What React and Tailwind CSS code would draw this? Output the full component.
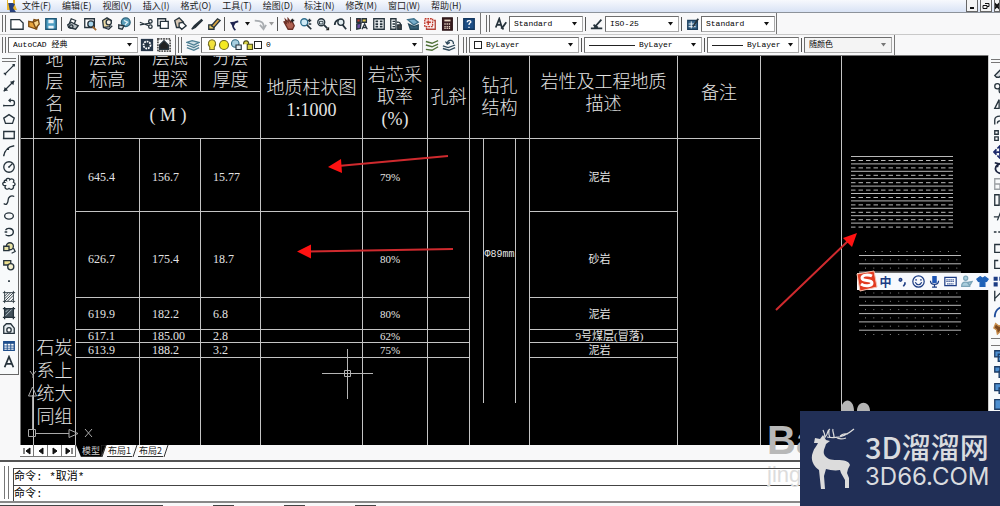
import React, { useState } from "react";

const Ico = ({ children, size = 14, color = "#26333c" }) => (
  <svg
    width={size}
    height={size}
    viewBox="0 0 16 16"
    fill="none"
    stroke={color}
    strokeWidth="1.5"
    className="shrink-0"
  >
    {children}
  </svg>
);

const standardTools = [
  [
    { name: "新建", art: <path d="M1 3h10l4 4v7H1z" fill="#fff" /> },
    {
      name: "打开",
      art: (
        <>
          <path d="M2 5l5 1 1-3 5 1-2 10-9-3z" fill="#e8a33a" stroke="#7a4a12" />
          <path d="M7 6l6-3 1 5-4 5z" fill="#f7d489" stroke="#7a4a12" />
        </>
      ),
    },
    {
      name: "保存",
      art: (
        <>
          <path d="M2 2h12v12H2z" fill="#4f9fc4" stroke="#1f5675" />
          <path d="M5 3h6v4H5zM5 10h6v3H5z" fill="#eef6fa" stroke="none" />
        </>
      ),
    },
  ],
  [
    {
      name: "打印",
      art: (
        <>
          <path d="M4 7l2-5 5 2-2 5" fill="#fff" />
          <path d="M2 9l4-3 8 4-3 4-8-2z" fill="#b9c0c4" />
          <circle cx="6" cy="11" r="2" />
        </>
      ),
    },
    {
      name: "打印预览",
      art: (
        <>
          <path d="M2 2h11v10H2z" fill="#fff" />
          <circle cx="9" cy="8" r="3.5" fill="#a9d5ea" />
          <path d="M11 11l4 4" stroke="#a0682d" strokeWidth="2" />
        </>
      ),
    },
    {
      name: "发布",
      art: (
        <>
          <path d="M3 4l5-3 5 3-2 7-7 1z" fill="#ead9a1" />
          <circle cx="10" cy="6" r="3" fill="#f4efe0" />
          <path d="M4 12l6 2 4-4" />
        </>
      ),
    },
    {
      name: "三维 DWF",
      art: (
        <>
          <circle cx="10" cy="6" r="5" fill="#5b9fbb" stroke="#2b6078" />
          <path d="M2 9l6 1-2 4-4-1z" fill="#cfd8dc" />
          <path d="M8 4l4 2-3 3" stroke="#e7f3f8" />
        </>
      ),
    },
  ],
  [
    {
      name: "剪切",
      art: (
        <>
          <path d="M1 6l10 4M1 9l12-2" />
          <circle cx="13" cy="5" r="2" />
          <circle cx="13" cy="11" r="2" />
        </>
      ),
    },
    {
      name: "复制",
      art: (
        <>
          <path d="M2 2h9v8H2z" fill="#fff" />
          <path d="M5 5h9v8H5z" fill="#fff" />
        </>
      ),
    },
    {
      name: "粘贴",
      art: (
        <>
          <path d="M2 4l5-3 5 5-2 6H4z" fill="#d6c7b4" />
          <path d="M7 7l4-1 4 4-5 4-3-3z" fill="#fff" />
        </>
      ),
    },
    {
      name: "特性匹配",
      art: <path d="M2 14l4-2 8-8-1-1-8 7z" fill="#222" />,
    },
    {
      name: "块编辑器",
      art: (
        <>
          <path d="M2 9h6v5H2z" fill="#f1d26a" />
          <path d="M5 10l7-8 3 2-7 8z" fill="#d8a441" />
        </>
      ),
    },
  ],
];

const viewTools = [
  [
    {
      name: "实时平移",
      art: (
        <>
          <path d="M2 5l3 2-1-4 3 3V2l3 4 1-2 3 6-2 4H7z" fill="#b06252" stroke="#6b2f25" />
          <path d="M12 2v4M10 4h4" stroke="#222" />
        </>
      ),
    },
    {
      name: "实时缩放",
      art: (
        <>
          <circle cx="6" cy="6" r="4" fill="#cfe9f5" stroke="#2d6d8d" />
          <path d="M9 9l5 5" strokeWidth="2" />
          <path d="M12 2v4M10 4h4M11 8h3" />
        </>
      ),
    },
    {
      name: "窗口缩放",
      art: (
        <>
          <circle cx="6" cy="6" r="4" fill="#e4eef2" />
          <path d="M4 5h4v3H4z" strokeWidth="1" />
          <path d="M9 9l4 4" strokeWidth="2" />
          <path d="M15 11v4h-4z" fill="#222" stroke="none" />
        </>
      ),
    },
    {
      name: "缩放上一个",
      art: (
        <>
          <path d="M2 9c0-5 5-7 9-6" strokeWidth="2" />
          <circle cx="9" cy="6" r="3.5" fill="#e4eef2" />
          <path d="M11 9l4 5" strokeWidth="2" />
        </>
      ),
    },
  ],
  [
    {
      name: "特性",
      art: (
        <>
          <path d="M2 2h4v4H2z" fill="#c0392b" />
          <path d="M8 2h5v4H8z" fill="#d9c24a" />
          <path d="M2 8l5-1-1 6-4 1z" fill="#6d4ba3" />
          <path d="M8 14l3-6 3 6M9 12h4" />
        </>
      ),
    },
    {
      name: "设计中心",
      art: (
        <>
          <path d="M2 2h12v12H2z" fill="#f3f6f7" />
          <path d="M4 5h3M4 8h3M4 11h3M9 5h3M9 8h3M9 11h3" strokeWidth="2" />
        </>
      ),
    },
    {
      name: "工具选项板",
      art: (
        <>
          <path d="M2 2h6v12H2z" fill="#f3f6f7" />
          <path d="M4 5h3M4 8h3M4 11h3M9 6c4-1 5 2 4 7" />
          <path d="M10 9h4v5h-4z" fill="#444" />
        </>
      ),
    },
    {
      name: "图纸集",
      art: (
        <>
          <path d="M2 3l7-1 5 4-5 3z" fill="#78aecb" stroke="#3c6f8a" />
          <path d="M3 8l6 3 5-2v5H5z" fill="#38637a" stroke="#24485a" />
        </>
      ),
    },
    {
      name: "标记集",
      art: (
        <>
          <path d="M2 2h9v9H2z" fill="#f9e5e5" stroke="#c0392b" strokeDasharray="2 1" />
          <path d="M12 4h2v10H4v-2" stroke="#b5453a" />
          <path d="M6 4v5M4 6h5" stroke="#c0392b" />
        </>
      ),
    },
    {
      name: "计算器",
      art: (
        <>
          <path d="M3 1h11v14H3z" fill="#3b1f22" stroke="#2b1417" />
          <path d="M5 3h7v2H5z" fill="#e8d8c4" stroke="none" />
          <path d="M5 8h7M5 11h7M5 13h7" stroke="#e8d8c4" strokeDasharray="1.5 1" />
        </>
      ),
    },
  ],
];

const drawTools = [
  { name: "直线", art: <path d="M3 13L13 3M2 12h2v2M12 2h2v2" /> },
  {
    name: "构造线",
    art: (
      <>
        <path d="M2 14L14 2" />
        <path d="M2 14l1-5 4 4zM14 2l-5 1 4 4z" fill="#26333c" stroke="none" />
      </>
    ),
  },
  { name: "多段线", art: <path d="M2 11h10c3 0 3-6 0-6H8M10 3L8 5l2 2M2 10v2" /> },
  { name: "正多边形", art: <path d="M8 3l6 4-2 6H4L2 7z" /> },
  { name: "矩形", art: <path d="M2 4h12v8H2zM1 12h3M12 4h3" /> },
  { name: "圆弧", art: <path d="M2 14C3 7 7 3 14 2M2 12v2M6 6h2" /> },
  {
    name: "圆",
    art: (
      <>
        <circle cx="8" cy="8" r="6" />
        <path d="M8 8l4-4M7 8h2" />
      </>
    ),
  },
  {
    name: "修订云线",
    art: (
      <path d="M5 4c-1-3 4-3 4-1 2-2 6 0 4 3 3 1 2 4 0 4 1 4-3 5-5 3-2 2-6 0-4-3-4 0-4-4-1-4-1-1 0-3 2-2z" />
    ),
  },
  { name: "样条曲线", art: <path d="M2 12c3 3 5-1 5-4s3-6 7-4" /> },
  { name: "椭圆", art: <ellipse cx="8" cy="8" rx="5" ry="3.5" /> },
  { name: "椭圆弧", art: <path d="M4 6c2-4 9-2 9 2 0 5-7 5-9 3M3 8h3" /> },
  {
    name: "插入块",
    art: (
      <>
        <circle cx="9" cy="6" r="4" fill="#e9e3a5" />
        <path d="M2 6h6v5H2z" fill="#e9e3a5" />
        <path d="M13 8l2 4-4 2" />
      </>
    ),
  },
  {
    name: "创建块",
    art: (
      <>
        <path d="M2 3h8v5H2z" fill="#eee08e" />
        <circle cx="10" cy="10" r="3.5" fill="#f6f1cf" />
      </>
    ),
  },
  { name: "点", art: <path d="M7 8h2" strokeWidth="2" /> },
  {
    name: "图案填充",
    art: (
      <path d="M1 3h14M1 13h14M3 1v14M13 1v14M3 7l4-4M3 10l7-7M3 13L13 3M6 13l7-7M10 13l3-3" strokeWidth="1" />
    ),
  },
  {
    name: "渐变色",
    art: (
      <>
        <path d="M3 3h10v10H3z" fill="#44525c" stroke="none" />
        <path d="M1 3h14M1 13h14M3 1v14M13 1v14" />
        <path d="M4 7l3-3M4 11l7-7" stroke="#b9c8d1" strokeWidth="1" />
      </>
    ),
  },
  {
    name: "面域",
    art: (
      <>
        <path d="M2 13V5l3-3h5l4 5v6z" fill="#e6ecef" />
        <circle cx="8" cy="9" r="2.5" fill="#fff" />
      </>
    ),
  },
  {
    name: "表格",
    art: (
      <>
        <path d="M2 3h12v10H2z" fill="#fff" stroke="#1e4e8c" />
        <path d="M2 4h12" stroke="#1e4e8c" strokeWidth="3" />
        <path d="M2 8h12M2 10.500h12M6 4v9M10 4v9" stroke="#1e4e8c" strokeWidth="1" />
      </>
    ),
  },
  { name: "多行文字", art: <path d="M3 14L8 2l5 12M5 10h6" strokeWidth="2" /> },
];

const modifyTools = [
  { name: "删除", art: <path d="M2 12l9-9 5 3-9 8H4z" fill="#d9dee2" /> },
  { name: "复制对象", art: <path d="M5 3a3 3 0 100 6 3 3 0 000-6zM10 8a3 3 0 100 6" /> },
  { name: "镜像", art: <path d="M2 13L7 3v10zM10 3v11" /> },
  { name: "偏移", art: <path d="M2 8c0-6 12-6 12 0M5 12c0-4 6-4 6 0M2 8v5" /> },
  { name: "阵列", art: <path d="M2 2h4v4H2zM9 2h4v4H9zM2 9h4v4H2zM9 9h4v4H9z" /> },
  {
    name: "移动",
    art: <path d="M8 1v14M1 8h14M5 4l3-3 3 3M5 12l3 3 3-3M4 5L1 8l3 3" stroke="#1b2a6b" strokeWidth="2" />,
  },
  { name: "旋转", art: <path d="M13 3C6 2 2 6 3 10s6 5 9 3M2 2l4 1-1 4" stroke="#1b2440" strokeWidth="2" /> },
  { name: "缩放", art: <path d="M2 2h12v12H2zM2 8h6v6" stroke="#9a9fa3" /> },
  { name: "拉伸", art: <path d="M2 2h5v12H2zM9 3l5 10" /> },
  { name: "修剪", art: <path d="M1 9h5M5 13L9 3M9 9h5" /> },
  { name: "延伸", art: <path d="M1 8h14" strokeDasharray="3 2" /> },
  { name: "打断于点", art: <path d="M2 4h12v9H2zM10 2v4" /> },
  { name: "打断", art: <path d="M6 4H2v9h12M10 2v4" /> },
  { name: "合并", art: <path d="M2 8h4M9 8h5" /> },
  { name: "倒角", art: <path d="M2 14V2M2 11l9-9h4" /> },
  { name: "圆角", art: <path d="M2 14C2 7 6 2 14 2" stroke="#1f4d9b" strokeWidth="2" /> },
  {
    name: "分解",
    art: <path d="M3 3l4 3 5-4-1 6 4 4-6-1-4 4-1-5-3-2z" fill="#7b4a21" stroke="#c98f4e" />,
  },
];

const orderTools = [
  { name: "前置", art: "M2 2h7v7H2zM6 6h8v8H6z" },
  { name: "后置", art: "M2 2h6v6H2zM7 7h7v7H7z" },
  { name: "置于对象之上", art: "M2 3h9v8H2zM7 8h7v6H7z" },
  { name: "置于对象之下", art: "M2 3h12v11H2z" },
];

const menus = [
  "文件(F)",
  "编辑(E)",
  "视图(V)",
  "插入(I)",
  "格式(O)",
  "工具(T)",
  "绘图(D)",
  "标注(N)",
  "修改(M)",
  "窗口(W)",
  "帮助(H)",
];

const layers = [
  { bottom: "645.4", depth: "156.7", thick: "15.77", rate: "79%", rock: "泥岩", row: "h-[73px]", pad: "pt-1", side: "pr-2" },
  { bottom: "626.7", depth: "175.4", thick: "18.7", rate: "80%", rock: "砂岩", row: "h-[86px]", pad: "pt-2", side: "pr-2" },
  { bottom: "619.9", depth: "182.2", thick: "6.8", rate: "80%", rock: "泥岩", row: "h-[32px]", pad: "pt-0", side: "pr-2" },
  { bottom: "617.1", depth: "185.00", thick: "2.8", rate: "62%", rock: "9号煤层(冒落)", row: "h-[13px]", pad: "pt-0", side: "pl-3" },
  { bottom: "613.9", depth: "188.2", thick: "3.2", rate: "75%", rock: "泥岩", row: "h-[15px]", pad: "pt-0", side: "pr-2" },
];

const Grip = () => (
  <div className="flex gap-[2px] self-stretch py-[2px] px-[2px] shrink-0">
    <span className="w-px bg-[#6b6b6b]" />
    <span className="w-px bg-[#6b6b6b]" />
  </div>
);

const Sep = () => <span className="w-px h-[14px] mx-[2px] bg-[#555] shrink-0" />;

const Tool = ({ tool }) => (
  <button
    type="button"
    aria-label={tool.name}
    className="w-[17px] h-[16px] flex items-center justify-center shrink-0"
  >
    <Ico>{tool.art}</Ico>
  </button>
);

const Caret = ({ color = "#111" }) => (
  <svg width="7" height="4" viewBox="0 0 7 4" className="shrink-0">
    <path d="M1 0h5L3.500 3.500z" fill={color} />
  </svg>
);

const Combo = ({ label, value, width, lead, disabled }) => (
  <div
    className={`${width} h-[16px] flex items-center gap-1 px-1 border-t border-l border-[#6d6d6d] border-r border-b border-r-[#aaa] border-b-[#aaa] shrink-0 ${
      disabled ? "bg-[#f4f4f4]" : "bg-white"
    }`}
  >
    {lead}
    <select
      aria-label={label}
      defaultValue={value}
      className="appearance-none bg-transparent flex-1 min-w-0 h-[14px] leading-[14px] text-[8px] text-black outline-none"
    >
      <option>{value}</option>
    </select>
    <Caret color={disabled ? "#777" : "#111"} />
  </div>
);

const MenuBar = () => (
  <nav className="h-[13px] flex items-center justify-between border-b border-[#8d939b] bg-linear-to-b from-[#f7f9fd] to-[#d9e3f5] text-[9px] leading-[12px] text-[#1c1c1c]">
    <div className="flex items-center gap-[11px] pl-[7px]">
      <svg width="10" height="12" viewBox="0 0 10 12" className="-mr-[6px]">
        <path d="M0 0h8v5l2 5H0z" fill="#e9b62c" />
        <path d="M1 1l7 3-2 4 3 4H3z" fill="#27407d" />
        <path d="M1 0h5v3H1z" fill="#fff" />
      </svg>
      {menus.map((m) => (
        <a key={m} href="#menu">
          {m}
        </a>
      ))}
    </div>
    <div className="flex gap-[2px] self-stretch">
      {["最小化", "还原", "关闭"].map((b, i) => (
        <button
          key={b}
          type="button"
          aria-label={b}
          className={`${
            i === 2 ? "w-[6px]" : "w-[12px]"
          } overflow-hidden bg-[#f4f4f4] border-r border-b border-l border-[#666] flex items-center justify-center`}
        >
          <svg width="8" height="8" viewBox="0 0 8 8" stroke="#111" fill="none" className="shrink-0">
            {i === 0 && <path d="M2 6h4" strokeWidth="2" />}
            {i === 1 && <path d="M3 1.500h4v3H5M1 3.500h4v3H1z" />}
            {i === 2 && <path d="M1 1l6 6M7 1L1 7" strokeWidth="2" />}
          </svg>
        </button>
      ))}
    </div>
  </nav>
);

const StandardBar = () => (
  <div className="h-[21px] flex items-center">
    <div className="flex items-center h-full border-r border-[#777] pr-[3px] mr-[3px]">
      <Grip />
      {standardTools.map((group, i) => (
        <React.Fragment key={i}>
          {group.map((t) => (
            <Tool key={t.name} tool={t} />
          ))}
          <Sep />
        </React.Fragment>
      ))}
      <Tool
        tool={{
          name: "放弃",
          art: (
            <>
              <path d="M12 14C5 13 4 9 8 4" stroke="#1f2450" strokeWidth="2" transform="rotate(40 8 8)" />
              <path d="M1 6l7-1-3 7z" fill="#1f2450" stroke="none" />
            </>
          ),
        }}
      />
      <Caret />
      <Tool tool={{ name: "重做", art: <path d="M2 4c8 0 11 3 10 9M8 9l4 5 3-5" stroke="#a9adb1" strokeWidth="2" /> }} />
      <Caret color="#999" />
      <Sep />
      {viewTools.map((group, i) => (
        <React.Fragment key={i}>
          {group.map((t) => (
            <Tool key={t.name} tool={t} />
          ))}
          <Sep />
        </React.Fragment>
      ))}
      <Tool
        tool={{
          name: "帮助",
          art: (
            <>
              <path d="M2 2h12v12H2z" fill="#1d4e86" stroke="#12365f" />
              <path d="M6 6c0-3 5-2 4 0-1 1-2 1-2 3M8 11v1.500" stroke="#fff" />
            </>
          ),
        }}
      />
    </div>
    <div className="flex items-center h-full border-r border-[#777] pr-px">
      <Grip />
      <Tool tool={{ name: "文字样式", art: <path d="M2 12L6 2l3 10M3 9h5M9 13l5-7M8 12l3 2" strokeWidth="2" /> }} />
      <Combo label="文字样式" value="Standard" width="w-[74px]" />
      <Sep />
      <Tool tool={{ name: "标注样式", art: <path d="M1 13h13M5 12l8-9M4 9l5 3" strokeWidth="2" /> }} />
      <Combo label="标注样式" value="ISO-25" width="w-[74px]" />
      <Sep />
      <Tool
        tool={{
          name: "表格样式",
          art: (
            <>
              <path d="M2 4h11v10H2z" fill="#3d6a8f" stroke="#1b3e5d" />
              <path d="M3 8h8M3 11h8M6 5v8" stroke="#fff" strokeWidth="1" />
              <path d="M8 11l6-9" strokeWidth="2" />
            </>
          ),
        }}
      />
      <Combo label="表格样式" value="Standard" width="w-[74px]" />
    </div>
  </div>
);

const swatch = <span className="w-[8px] h-[8px] border border-[#222] bg-white shrink-0" />;

const LayerBar = () => (
  <div className="h-[21px] flex items-center border-t border-[#c9c9c9]">
    <div className="flex items-center h-full border-r border-[#777] pr-[3px]">
      <Grip />
      <Combo label="工作空间" value="AutoCAD 经典" width="w-[130px]" />
      <Tool
        tool={{
          name: "工作空间设置",
          art: (
            <>
              <path d="M1 1h14v14H1z" fill="#27374a" stroke="none" />
              <circle cx="8" cy="8" r="4" stroke="#fff" strokeDasharray="2 1" strokeWidth="2" />
              <circle cx="8" cy="8" r="1" fill="#fff" />
            </>
          ),
        }}
      />
      <Tool
        tool={{
          name: "我的工作空间",
          art: (
            <>
              <path d="M1 1h14v14H1z" stroke="#555" strokeDasharray="2 1" strokeWidth="2" />
              <path d="M3 8l5-5 5 5v5H3z" fill="#222" />
            </>
          ),
        }}
      />
    </div>
    <div className="flex items-center h-full border-r border-[#777] pr-[1px] mr-[2px]">
      <Grip />
      <Tool
        tool={{
          name: "图层特性管理器",
          art: <path d="M1 5l6-2 8 2-6 3zM1 8l8 3 6-3M1 11l8 3 6-3" stroke="#4d7f93" fill="#cfe0e6" />,
        }}
      />
      <Combo
        label="图层"
        value="0"
        width="w-[222px]"
        lead={
          <span className="flex items-center shrink-0">
            <Ico size={12}>
              <path d="M5 11C1 6 4 1 8 1s7 5 3 10v3H5z" fill="#f2e23c" stroke="#77702a" />
            </Ico>
            <Ico size={12}>
              <circle cx="8" cy="8" r="6" fill="#f4ea21" stroke="#6f6a20" />
            </Ico>
            <Ico size={12}>
              <circle cx="7" cy="6" r="5" fill="#a8cfe0" stroke="#2f6981" />
              <path d="M8 8h7v6H8z" fill="#dfe9ee" />
            </Ico>
            <Ico size={12}>
              <path d="M2 7c0-6 7-6 7 0M7 7h7v7H7z" fill="#d9d443" stroke="#4c4a19" />
            </Ico>
            {swatch}
          </span>
        }
      />
      <Tool
        tool={{
          name: "将对象的图层置为当前",
          art: <path d="M1 4l7 2 7-3M1 8l7 2 7-3M1 13l7 1 7-4" stroke="#4f7136" />,
        }}
      />
      <Tool
        tool={{
          name: "上一个图层",
          art: <path d="M1 9l6 2 8-3M1 12l7 2 7-3M6 6c1-5 8-4 7 1M4 4l2 3 3-2" stroke="#2f4a5c" />,
        }}
      />
    </div>
    <div className="flex items-center h-full border-r border-[#777] pr-[2px]">
      <Grip />
      <Combo label="颜色" value="ByLayer" width="w-[110px]" lead={swatch} />
      <Sep />
      <Combo
        label="线型"
        value="ByLayer"
        width="w-[118px]"
        lead={<span className="w-[46px] h-px bg-[#222] shrink-0" />}
      />
      <Sep />
      <Combo
        label="线宽"
        value="ByLayer"
        width="w-[92px]"
        lead={<span className="w-[31px] h-px bg-[#222] shrink-0" />}
      />
      <Sep />
      <Combo label="打印样式" value="随颜色" width="w-[88px]" disabled />
    </div>
  </div>
);

const cell = "p-0 border-r border-b border-[#c4c4c4]";
const tail = "p-0 border-r border-[#c4c4c4]";
const head = `${cell} font-light text-[18px] leading-[22px] text-center align-middle`;

const BoreholeTable = () => (
  <table className="table-fixed border-separate border-spacing-0 w-[821px] -mt-[9px] text-[#e4e4e4] font-light">
    <colgroup>
      <col className="w-[13px]" />
      <col className="w-[42px]" />
      <col className="w-[64px]" />
      <col className="w-[61px]" />
      <col className="w-[60px]" />
      <col className="w-[102px]" />
      <col className="w-[65px]" />
      <col className="w-[42px]" />
      <col className="w-[60px]" />
      <col className="w-[148px]" />
      <col className="w-[83px]" />
      <col className="w-[81px]" />
    </colgroup>
    <thead>
      <tr className="h-[45px]">
        <th rowSpan={2} className={cell}></th>
        <th rowSpan={2} className={`${head} px-[10px]`}>地层名称</th>
        <th className={`${head} px-[12px]`}>层底标高</th>
        <th className={`${head} px-[11px]`}>层底埋深</th>
        <th className={`${head} px-[11px]`}>分层厚度</th>
        <th rowSpan={2} className={`${head} pt-3`}>
          地质柱状图
          <br />
          1:1000
        </th>
        <th rowSpan={2} className={`${head} pt-2`}>
          岩芯采
          <br />
          取率
          <br />
          (%)
        </th>
        <th rowSpan={2} className={`${head} pt-2`}>孔斜</th>
        <th rowSpan={2} className={`${head} pt-2 px-[10px]`}>钻孔结构</th>
        <th rowSpan={2} className={head}>
          岩性及工程地质
          <br />
          描述
        </th>
        <th rowSpan={2} className={head}>备注</th>
        <th rowSpan={2} className={tail}></th>
      </tr>
      <tr className="h-[47px]">
        <th colSpan={3} className={head}>( M )</th>
      </tr>
    </thead>
    <tbody className="text-[12px] leading-[12px]">
      {layers.map((l, i) => (
        <tr key={l.bottom} className={l.row}>
          {i === 0 && (
            <>
              <td rowSpan={6} className={tail}></td>
              <td
                rowSpan={6}
                className="p-0 pb-4 px-[2px] border-r border-[#c4c4c4] align-bottom text-center text-[18px] leading-[23px]"
              >
                石炭系上统大同组
              </td>
            </>
          )}
          <td className={`${cell} pl-3 ${l.pad}`}>{l.bottom}</td>
          <td className={`${cell} pl-3 ${l.pad}`}>{l.depth}</td>
          <td className={`${cell} pl-3 ${l.pad}`}>{l.thick}</td>
          <td className={cell}></td>
          <td className={`${cell} text-center pr-[10px] text-[11px] ${l.pad}`}>{l.rate}</td>
          <td className={cell}></td>
          {i === 0 && (
            <td rowSpan={6} className="p-0 pl-[13px] border-r border-[#c4c4c4] align-top">
              <div className="w-[33px] h-[264px] pb-8 flex items-center justify-center border-x border-[#c4c4c4] font-['Liberation_Mono',monospace] text-[10px]">
                Φ89mm
              </div>
            </td>
          )}
          <td className={`${cell} text-center text-[11px] font-normal ${l.pad} ${l.side}`}>{l.rock}</td>
          {i === 0 && (
            <>
              <td rowSpan={6} className={tail}></td>
              <td rowSpan={6} className={tail}></td>
            </>
          )}
        </tr>
      ))}
      <tr className="h-[87px]">
        <td className={tail}></td>
        <td className={tail}></td>
        <td className={tail}></td>
        <td className={tail}></td>
        <td className={tail}></td>
        <td className={tail}></td>
        <td className={tail}></td>
      </tr>
    </tbody>
  </table>
);

const hatchRows = [0, 1, 2, 3, 4, 5, 6, 7, 8, 9];

// hatch samples, arrows, cursor and UCS icon drawn over the sheet
const Drawing = () => (
  <svg width="968" height="389" viewBox="21 56 968 389" className="absolute left-0 top-0" fill="none">
    {hatchRows.map((n) => (
      <g key={n} stroke="#b9b9b9">
        <path d={`M851 ${156.5 + n * 7.4}h102`} />
        <path d={`M851 ${160.5 + n * 7.4}h102`} strokeDasharray="4.500 3" />
      </g>
    ))}
    {hatchRows.map((n) => (
      <g key={n}>
        <path d={`M859 ${255.5 + n * 8.3}h102`} stroke="#b9b9b9" />
        <path d={`M865 ${251.5 + n * 8.3}h94`} stroke="#8a8a8a" strokeDasharray="1 7.300" />
      </g>
    ))}
    <path d="M865 334.500h94" stroke="#8a8a8a" strokeDasharray="1 7.300" />
    <g stroke="#cf2a2e" strokeWidth="2">
      <path d="M338 166L448 156M308 251.500L453 249M776 310L848 241" />
    </g>
    <g fill="#ff1212">
      <path d="M328 167l13-8 1 14zM297 251.500l14-7v14zM857 233l-5 14-9-9z" />
    </g>
    <path d="M322 373.500h51M347.500 349v50M344.500 370.500h6v6h-6z" stroke="#b5b5b5" />
    <g stroke="#a9a9a9">
      <path d="M28.500 429.500h7v7h-7zM32.500 429v-34M36 433.500h33" />
      <path d="M69 429.500v8l9-4zM28.500 396h8l-4-9z" />
      <path d="M85 429l7 8M92 429l-7 8M30 371l3 4 3-4M33 375v3" />
    </g>
  </svg>
);

const ImeBar = () => (
  <div className="absolute right-0 top-[273px] w-[143px] h-[17px] flex items-center bg-[#f7f9fd] pl-[20px] text-[#1c3c84] font-['Noto_Sans_CJK_SC',sans-serif]">
    <svg width="22" height="22" viewBox="0 0 22 22" className="absolute -left-[1px] -top-[3px]">
      <path d="M1 4l17-3 3 16-17 4z" fill="#e23a20" stroke="#f7c1ae" />
      <path
        d="M16 6c-4-2-10-1-10 2 0 4 10 1 10 5 0 3-7 4-11 1"
        fill="none"
        stroke="#fff"
        strokeWidth="3"
      />
    </svg>
    <div className="flex items-center w-full overflow-hidden">
      <span className="w-[17px] text-center text-[12px] leading-[16px] font-bold shrink-0">中</span>
      {[
        <path d="M4 6a1.500 1.500 0 100-.1M11 9v2l-2 3" strokeWidth="2" />,
        <>
          <circle cx="8" cy="8" r="7" />
          <path d="M5 5v2M11 5v2M4 9c2 4 6 4 8 0" />
        </>,
        <>
          <path d="M6 2h4v7H6z" fill="#1f56b5" stroke="#1f56b5" />
          <path d="M3 7c0 6 10 6 10 0M8 12v3M5 15h6" />
        </>,
        <>
          <path d="M1 3h14v10H1z" />
          <path d="M3 6h10M3 8h10M4 11h8" strokeDasharray="1.500 1" />
        </>,
        <>
          <circle cx="7" cy="4" r="2.500" fill="#a9cddd" stroke="#7ba4b8" />
          <path d="M2 14c0-7 9-7 10 0zM9 9l6-1-3 5z" fill="#a9cddd" stroke="#7ba4b8" />
        </>,
        <path d="M5 2l3 2 3-2 4 3-2 3-2-1v7H5V7L3 8 1 5z" fill="#1f62b8" stroke="#1f62b8" />,
        <path d="M2 2h5v5H2zM2 9h5v5H2zM9 2h5v5H9z" fill="#1c3c84" stroke="none" />,
      ].map((art, i) => (
        <span key={i} className="w-[16px] flex justify-center shrink-0">
          <Ico size={13} color="#1c3c84">
            {art}
          </Ico>
        </span>
      ))}
    </div>
  </div>
);

const LayoutTabs = () => {
  const [tab, setTab] = useState("模型");
  const arrows = ["M2 2v6M8 2L4 5l4 3z", "M7 2L3 5l4 3z", "M3 2l4 3-4 3z", "M2 2l4 3-4 3zM8 2v6"];
  return (
    <div className="h-[12px] ml-[20px] flex text-[9px] leading-[12px] text-[#222]">
      {arrows.map((d) => (
        <button
          key={d}
          type="button"
          aria-label="翻页"
          className="w-[14px] border border-l-0 border-t-0 border-[#777] bg-white flex items-center justify-center"
        >
          <svg width="10" height="10" viewBox="0 0 10 10" fill="#111" stroke="#111">
            <path d={d} />
          </svg>
        </button>
      ))}
      <svg width="5" height="12" viewBox="0 0 5 12">
        <path d="M0 0h5v12z" fill="#000" />
      </svg>
      {["模型", "布局1", "布局2"].map((t) => (
        <React.Fragment key={t}>
          <button
            type="button"
            onClick={() => setTab(t)}
            className={`px-px border-b border-[#333] ${
              tab === t ? "bg-black text-[#d0d0d0]" : "bg-white"
            }`}
          >
            {t}
          </button>
          <svg width="6" height="12" viewBox="0 0 6 12" stroke="#333" fill="none">
            {tab === t && <path d="M0 0h5L0 12z" fill="#000" />}
            <path d="M5 0L1 12" />
          </svg>
        </React.Fragment>
      ))}
    </div>
  );
};

const CommandLine = () => (
  <div className="flex mt-[3px] border-t-2 border-[#555] bg-white pt-[2px] text-[11px] leading-[16px] text-black font-['Liberation_Mono','Noto_Sans_CJK_SC',monospace]">
    <div className="flex gap-[3px] px-[4px] py-[2px]">
      <span className="w-px bg-[#777]" />
      <span className="w-px bg-[#777]" />
    </div>
    <div className="flex-1 mt-[4px] border-l border-t border-[#444]">
      <p className="h-[17px] border-b border-[#444]">命令: *取消*</p>
      <div className="flex h-[15px]">
        <label htmlFor="cmd">命令:</label>
        <input id="cmd" className="flex-1 outline-none" />
      </div>
    </div>
  </div>
);

const Watermark = () => (
  <>
    <div className="absolute right-[200px] bottom-0 w-[33px] h-[88px] overflow-hidden font-['Liberation_Sans',sans-serif]">
      <p className="text-[40px] leading-[44px] font-bold text-[#b8b8b8]">Bai</p>
      <p className="text-[22px] leading-[26px] text-[#dcdcdc]">jing</p>
    </div>
    <div className="absolute right-0 bottom-0 w-[200px] h-[95px] bg-[#212f56] flex items-center text-[#d9dbdf]">
      <svg width="32" height="18" viewBox="0 0 32 18" className="absolute left-[40px] -top-[12px]" fill="#b4b4b4">
        <path d="M1 12C1 -2 14 -2 14 12zM17 12C17 1 30 1 30 12z" />
      </svg>
      <svg width="46" height="62" viewBox="0 0 46 62" className="ml-[11px] shrink-0">
        <path
          d="M4 10l5 1 3-4 3 5 4 1-4 3c-1 4-3 6-2 10 2 5 7 6 13 6 7 0 12 1 13 5l-2 4-1 4 2 5v10h-4v-8l-4-7-1-3c-5 1-10 0-14-1l-2 7 1 13h-4l-2-19c-6-4-9-11-6-18 1-4 4-6 5-9l-4 0z"
          fill="#dcdcdc"
        />
        <path
          d="M14 10c0-4-1-6-2-8M14 9c4-3 1-6 5-8M16 9c9 2 19-1 27-8M23 9c0-4-2-6-1-8M29 8c4-2 3-3 8-2M25 9c3 3 7 2 10 1M19 9c-2-3-1-4-1-7"
          fill="none"
          stroke="#dcdcdc"
          strokeWidth="1.200"
        />
      </svg>
      <div className="ml-[8px] whitespace-nowrap">
        <p className="text-[29px] leading-[36px] font-medium font-['Noto_Sans_CJK_SC',sans-serif]">3D溜溜网</p>
        <p className="text-[24px] leading-[26px] font-['Inter',sans-serif]">3D66.COM</p>
      </div>
    </div>
  </>
);

const App = () => {
  return (
    <div className="relative h-screen overflow-hidden bg-[#f8f8f9] font-['Liberation_Serif','Noto_Sans_CJK_SC',serif]">
      <header>
        <div className="font-['Noto_Sans_CJK_SC',sans-serif]">
          <MenuBar />
        </div>
        <div className="font-['Liberation_Mono','Noto_Sans_CJK_SC',monospace]">
          <StandardBar />
          <LayerBar />
        </div>
      </header>

      <main className="flex">
        <aside className="w-[19px] h-[320px] flex flex-col items-center justify-between pt-[3px] pb-[4px] border-r border-b border-[#666] bg-[#f8fafb]">
          <div className="w-[14px] h-[4px] border-y border-[#777]" />
          {drawTools.map((t) => (
            <Tool key={t.name} tool={t} />
          ))}
        </aside>
        <section className="relative flex-1 ml-px bg-black border-l border-t border-[#777] overflow-hidden">
          <BoreholeTable />
          <Drawing />
        </section>
        <aside className="w-[12px] pl-[2px] overflow-hidden flex flex-col items-start pt-[4px] bg-[#f8fafb] border-l border-[#ccc]">
          <div className="w-[14px] h-[4px] mb-px border-y border-[#777] shrink-0" />
          {modifyTools.map((t) => (
            <Tool key={t.name} tool={t} />
          ))}
          <div className="w-[14px] h-[8px] my-[2px] border-y border-[#777] shrink-0" />
          {orderTools.map((t) => (
            <Tool
              key={t.name}
              tool={{ name: t.name, art: <path d={t.art} fill="#4d8fd0" stroke="#1d3d66" /> }}
            />
          ))}
        </aside>
      </main>

      <footer>
        <div className="font-['Noto_Sans_CJK_SC',sans-serif]">
          <LayoutTabs />
        </div>
        <CommandLine />
        <div className="flex h-[6px] border-t-2 border-[#888] pt-[2px] gap-[50px]">
          <span className="w-[163px] h-px bg-[#444]" />
          <span className="w-[21px] h-px bg-[#444]" />
          <span className="w-[21px] h-px bg-[#444]" />
          <span className="w-[21px] h-px bg-[#444]" />
        </div>
      </footer>

      <ImeBar />
      <Watermark />
    </div>
  );
};

export default App;
